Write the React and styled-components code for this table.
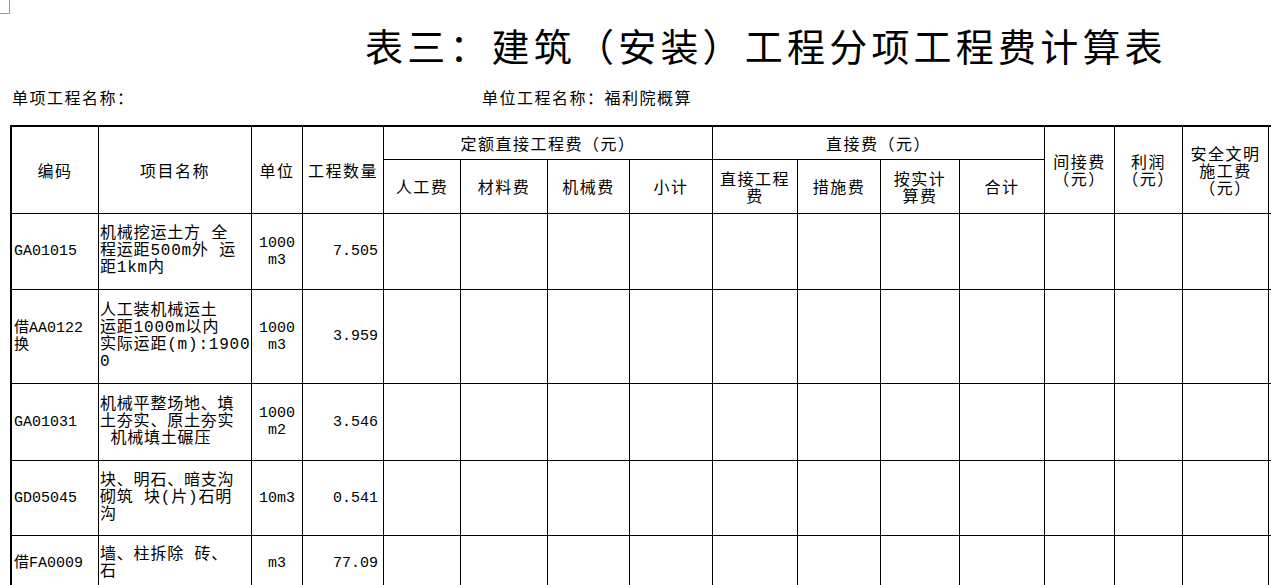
import React from 'react';
import styled, { createGlobalStyle } from 'styled-components';

const GlobalStyle = createGlobalStyle`
  * { box-sizing: border-box; }
  html, body { margin: 0; padding: 0; background: #fff; overflow: hidden; }
  body { font-family: "Noto Sans CJK SC", sans-serif; color: #000; }
`;

const Page = styled.div`
  width: 1271px;
  height: 585px;
  overflow: hidden;
  background: #fff;
`;

const CornerMark = styled.div`
  width: 10px;
  height: 14px;
  border-right: 1px solid #9a9a9a;
  border-bottom: 1px solid #9a9a9a;
`;

const Title = styled.h1`
  margin: 12px 0 0;
  padding-left: 365px;
  font-family: "Noto Sans CJK SC", sans-serif;
  font-size: 38px;
  font-weight: 400;
  line-height: 38px;
  letter-spacing: 4.2px;
  white-space: nowrap;
`;

const InfoRow = styled.div`
  display: flex;
  align-items: center;
  height: 24px;
  margin-top: 21px;
  padding-left: 12px;
  font-size: 16px;
  letter-spacing: 1.5px;
  white-space: nowrap;
`;

const InfoItem = styled.div`
  width: ${p => (p.$w ? `${p.$w}px` : 'auto')};
`;

const Sheet = styled.table`
  margin: 16px 0 0 10px;
  width: ${p => p.$w}px;
  table-layout: fixed;
  border-collapse: separate;
  border-spacing: 0;
  border-top: 2px solid #000;
  border-left: 2px solid #000;
`;

const Col = styled.col`
  width: ${p => p.$w}px;
`;

const Row = styled.tr`
  height: ${p => p.$h}px;
`;

const Th = styled.th`
  border-right: 1px solid #000;
  border-bottom: 1px solid #000;
  padding: 0 1px;
  font-family: "Noto Sans CJK SC", sans-serif;
  font-weight: 400;
  font-size: 16px;
  line-height: 17px;
  letter-spacing: 1.5px;
  text-align: center;
  vertical-align: middle;
  white-space: nowrap;
  overflow: hidden;
`;

const Td = styled.td`
  border-right: 1px solid #000;
  border-bottom: 1px solid #000;
  padding: ${p => (p.$align === 'right' ? '0 5px 0 2px' : '0 2px')};
  text-align: ${p => p.$align || 'left'};
  vertical-align: middle;
  font-family: "Liberation Mono", "Noto Sans CJK SC", monospace;
  font-size: 15px;
  line-height: 17px;
  white-space: nowrap;
  overflow: hidden;
`;

const NameCell = styled(Td)`
  font-size: 16px;
  letter-spacing: 0.8px;
  padding: 0 1px;
`;

const Line = styled.div``;

// column widths taken from the grid lines of the sheet
const widths = [87, 153, 51, 81, 77, 87, 82, 83, 85, 83, 79, 85, 70, 68, 86, 102];

const rows = [
  { h: 76, code: ['GA01015'], name: ['机械挖运土方 全', '程运距500m外 运', '距1km内'], unit: ['1000', 'm3'], qty: '7.505' },
  { h: 94, code: ['借AA0122', '换'], name: ['人工装机械运土', '运距1000m以内', '实际运距(m):1900', '0'], unit: ['1000', 'm3'], qty: '3.959' },
  { h: 77, code: ['GA01031'], name: ['机械平整场地、填', '土夯实、原土夯实', '\u00a0机械填土碾压'], unit: ['1000', 'm2'], qty: '3.546' },
  { h: 75, code: ['GD05045'], name: ['块、明石、暗支沟', '砌筑 块(片)石明', '沟'], unit: ['10m3'], qty: '0.541' },
  { h: 56, code: ['借FA0009'], name: ['墙、柱拆除 砖、', '石'], unit: ['m3'], qty: '77.09' },
];

const sub1 = ['人工费', '材料费', '机械费', '小计'];
const sub2 = [['直接工程', '费'], ['措施费'], ['按实计', '算费'], ['合计']];

const lines = arr => arr.map((t, i) => <Line key={i}>{t}</Line>);

const App = () => {
  const total = widths.reduce((a, b) => a + b, 0) + 2;
  return (
    <Page>
      <GlobalStyle />
      <CornerMark />
      <Title>表三：建筑（安装）工程分项工程费计算表</Title>
      <InfoRow>
        <InfoItem $w={470}>单项工程名称：</InfoItem>
        <InfoItem>单位工程名称：福利院概算</InfoItem>
      </InfoRow>
      <Sheet $w={total}>
        <colgroup>
          {widths.map((w, i) => <Col key={i} $w={w} />)}
        </colgroup>
        <thead>
          <Row $h={33}>
            <Th rowSpan={2}>编码</Th>
            <Th rowSpan={2}>项目名称</Th>
            <Th rowSpan={2}>单位</Th>
            <Th rowSpan={2}>工程数量</Th>
            <Th colSpan={4}>定额直接工程费（元）</Th>
            <Th colSpan={4}>直接费（元）</Th>
            <Th rowSpan={2}>{lines(['间接费', '（元）'])}</Th>
            <Th rowSpan={2}>{lines(['利润', '（元）'])}</Th>
            <Th rowSpan={2}>{lines(['安全文明', '施工费', '（元）'])}</Th>
            <Th rowSpan={2}></Th>
          </Row>
          <Row $h={54}>
            {sub1.map(t => <Th key={t}>{t}</Th>)}
            {sub2.map(t => <Th key={t[0]}>{lines(t)}</Th>)}
          </Row>
        </thead>
        <tbody>
          {rows.map(r => (
            <Row key={r.code[0]} $h={r.h}>
              <Td>{lines(r.code)}</Td>
              <NameCell>{lines(r.name)}</NameCell>
              <Td $align="center">{lines(r.unit)}</Td>
              <Td $align="right">{r.qty}</Td>
              {widths.slice(4).map((_, i) => <Td key={i} />)}
            </Row>
          ))}
        </tbody>
      </Sheet>
    </Page>
  );
};

export default App;
